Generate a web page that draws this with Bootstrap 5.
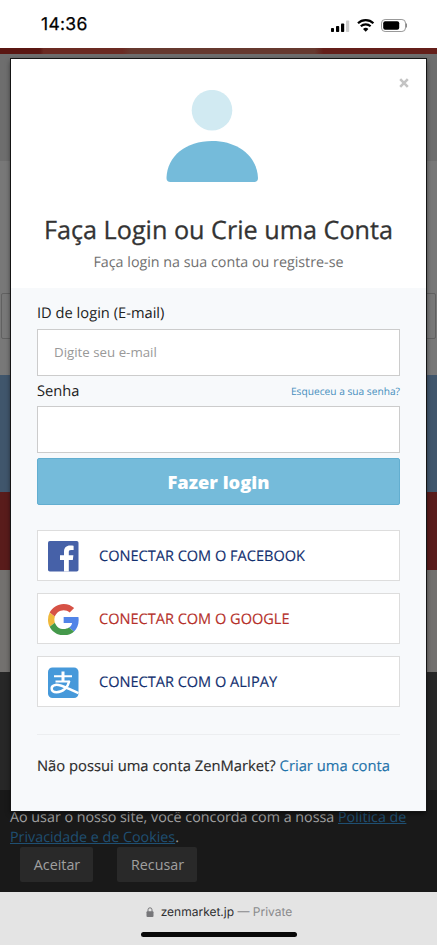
<!DOCTYPE html>
<html lang="pt">
<head>
<meta charset="utf-8">
<meta name="viewport" content="width=device-width, initial-scale=1">
<title>ZenMarket</title>
<link rel="stylesheet" href="https://cdn.jsdelivr.net/npm/bootstrap@5.3.0/dist/css/bootstrap.min.css">
<style>
body{font-family:"Open Sans","Noto Sans",sans-serif;height:945px;font-size:14px;color:#2b2b2b;background:#191919;text-rendering:geometricPrecision}
.ios{font-family:Inter,"Liberation Sans",sans-serif}
.status{height:48px;padding:3px 30px 0 41px}
.clock{font-size:17.500px;font-weight:400;color:#000;letter-spacing:.3px;-webkit-text-stroke:.25px #000}
.strip-top{height:6px;background:linear-gradient(90deg,#5a1612 0 9%,#6b2a22 10% 28%,#66392f 30% 72%,#641f1a 74%)}
.strip-nav{height:107px;background:#6e6e6e}
.strip-body{height:214px;background:#787878;padding:132px 1px 0}
.search-frame{height:46px;border:1px solid #616161;border-radius:2px}
.strip-blue{height:117px;background:#40566c}
.strip-red{height:78px;background:#591c1b}
.strip-gray{height:102px;background:#73716f}
.strip-dark{height:118px;background:#272727}
.cookie{height:102px;background:#191919;color:#a0a0a0;padding:18px 10px 0;line-height:20px;font-size:14.300px;white-space:nowrap}
.cookie a{color:#1f4f72}
.cookie-buttons{margin-top:-1px}
.btn-cookie{background:#292929;color:#a0a0a0;border-radius:2px;height:35px;font-size:14.300px;line-height:20px;border:0;padding:7px 0 6px 1px}
.btn-accept{width:73px;margin-left:10px}
.btn-refuse{width:80px;margin-left:24px}
.safari{height:53px;background:#e4e4e4;color:#8a8a8c;font-size:12px;padding-top:12px}
.safari b{color:#2f2f31;font-weight:400}
.lock{margin-right:3px;margin-left:1px}
.home-bar{width:156px;height:5px;border-radius:3px;background:#080808}
.login-box{left:11px;top:59px;width:415px;height:752px;background:#f7f9fb;box-shadow:0 0 0 1px #151515,0 2px 5px rgba(0,0,0,.65)}
.login-head{height:229px;background:#fff;padding-top:31px}
.close-x{right:17px;top:19px;width:10px;height:10px}
.avatar{margin-right:13px}
.title-line{font-size:25.200px;line-height:32px;margin-top:32px;color:#333;-webkit-text-stroke:.3px #333}
.sub-line{font-size:14.300px;line-height:20px;color:#707070;margin-top:7px}
.login-body{padding:15px 26px 0}
.lbl{line-height:20px;height:20px;font-size:14.700px;color:#222}
.form-control.zen{height:47px;border:1px solid #ccc;border-radius:0;padding:0 16px 1px;font-size:13.300px;background:#fff}
.form-control.zen::placeholder{color:#999;opacity:1}
.mail-field{margin:6px 0 5px}
.pass-field,.btn-zen{margin-top:5px}
.forgot{font-size:10.200px;color:#478fbe;padding-top:2px}
.btn-zen{height:47px;background:#75bbda;border:1px solid #62aed0;border-radius:2px;color:#fff;font-size:18.300px;font-weight:800;padding:0}
.socials{gap:12px;margin-top:25px}
.social{height:51px;border:1px solid #ddd;background:#fff;padding-left:9px;font-size:14.550px;color:#13306f}
.social span{padding-top:2px;-webkit-text-stroke:.15px currentColor}
.social svg{width:32px;height:32px;margin-right:20px}
.social.g{color:#b5302a}
.rule{height:1px;background:#eceef0;margin-top:27px}
.foot-line{margin-top:21px;line-height:20px;font-size:14.770px;white-space:nowrap;-webkit-text-stroke:.15px currentColor}
.foot-line a{color:#1f73aa}
</style>
<script src="https://cdn.jsdelivr.net/npm/bootstrap@5.3.0/dist/js/bootstrap.bundle.min.js"></script>
</head>
<body class="m-0 position-relative overflow-hidden">
<header class="status ios bg-white d-flex align-items-center justify-content-between">
  <span class="clock">14:36</span>
  <svg width="77" height="16" viewBox="0 0 77 16">
    <rect x="1" y="10" width="3" height="4" rx=".8"/><rect x="6" y="8" width="3.200" height="6" rx=".8"/><rect x="11" y="5.500" width="3.200" height="8.500" rx=".8"/><rect x="16" y="2.500" width="3.200" height="11.500" rx=".8" fill="#ccc"/>
    <g transform="translate(0 -1)"><g fill="none" stroke="#000" stroke-width="2.200"><path d="M28 6.300a11 11 0 0 1 15.400 0M30.800 9.200a7.200 7.200 0 0 1 9.800 0"/></g><path d="M33 11.900a4 4 0 0 1 5.400 0l-2.700 2.800z"/></g>
    <rect x="51.500" y="1.500" width="24" height="12" rx="3.600" fill="#fff" stroke="#999"/><rect x="53.200" y="3.200" width="16" height="8.600" rx="2"/><path d="M76.500 5.500v4" stroke="#888"/>
  </svg>
</header>
<div class="strip-top"></div>
<div class="strip-nav"></div>
<div class="strip-body"><div class="search-frame"></div></div>
<div class="strip-blue"></div>
<div class="strip-red"></div>
<div class="strip-gray"></div>
<div class="strip-dark"></div>
<div class="cookie">
  <div>Ao usar o nosso site, você concorda com a nossa <a href="#">Política de</a></div>
  <div><a href="#">Privacidade e de Cookies</a>.</div>
  <div class="cookie-buttons d-flex">
    <button class="btn btn-cookie btn-accept">Aceitar</button>
    <button class="btn btn-cookie btn-refuse">Recusar</button>
  </div>
</div>
<footer class="safari ios d-flex flex-column align-items-center">
  <div class="d-flex align-items-center lh-sm">
    <svg width="8" height="10" viewBox="0 0 8 10" class="lock"><rect x=".5" y="4.200" width="7" height="5.800" rx="1" fill="#77777a"/><path d="M2 5V2.800a2 2 0 0 1 4 0V5" fill="none" stroke="#77777a"/></svg>
    <span class="ms-1"><b>zenmarket.jp</b> — Private</span>
  </div>
  <div class="home-bar mt-auto mb-2"></div>
</footer>

<main class="login-box position-absolute">
  <svg class="close-x position-absolute" viewBox="0 0 10 10"><path d="M1.200 1.200l7.600 7.600M8.800 1.200l-7.600 7.600" stroke="#c4c4c4" stroke-width="2.600"/></svg>
  <div class="login-head d-flex flex-column align-items-center text-nowrap">
    <svg class="avatar flex-shrink-0" width="92" height="92" viewBox="0 0 92 92"><circle cx="46" cy="20.200" r="20.300" fill="#d1eaf2"/><path d="M0.500 88C1 66 20 51 46 51s45 15 46 37q0 4-4 4H4.500q-4 0-4-4z" fill="#75bbda"/></svg>
    <div class="title-line">Faça Login ou Crie uma Conta</div>
    <div class="sub-line">Faça login na sua conta ou registre-se</div>
  </div>
  <div class="login-body d-flex flex-column">
    <label class="lbl" for="mail">ID de login (E-mail)</label>
    <input id="mail" class="form-control zen mail-field" placeholder="Digite seu e-mail">
    <div class="d-flex justify-content-between align-items-center">
      <label class="lbl" for="pass">Senha</label><a class="forgot text-decoration-none" href="#">Esqueceu a sua senha?</a>
    </div>
    <input id="pass" type="password" class="form-control zen pass-field">
    <button class="btn btn-zen w-100">Fazer login</button>
    <div class="socials d-grid">
      <div class="social d-flex align-items-center">
        <svg viewBox="0 0 32 32"><rect x="1" y="1" width="30.500" height="30.500" rx="1.800" fill="#4661a8"/><path d="M17 31.500V20h-4v-4.800h4v-3.500c0-4 2.400-6.200 6-6.200 1.700 0 3.200.1 3.600.2v4.200h-2.500c-1.900 0-2.300.9-2.300 2.300v3h4.600l-.6 4.800h-4v11.500z" fill="#fff"/></svg>
        <span>CONECTAR COM O FACEBOOK</span>
      </div>
      <div class="social g d-flex align-items-center">
        <svg viewBox="-1.500 -1.500 49 49"><path fill="#d65145" d="M24 9.500c3.540 0 6.710 1.220 9.210 3.600l6.850-6.850C35.900 2.380 30.470 0 24 0 14.620 0 6.510 5.380 2.560 13.220l7.980 6.190C12.430 13.720 17.740 9.500 24 9.500z"/><path fill="#5184e8" d="M46.980 24.550c0-1.570-.15-3.090-.38-4.550H24v9.020h12.940c-.58 2.960-2.260 5.480-4.780 7.180l7.730 6c4.510-4.180 7.090-10.360 7.090-17.650z"/><path fill="#efb83b" d="M10.530 28.590A14.500 14.500 0 0 1 9.770 24c0-1.600.27-3.140.76-4.590l-7.980-6.190A23.900 23.900 0 0 0 0 24c0 3.880.92 7.540 2.560 10.780z"/><path fill="#45994b" d="M24 48c6.480 0 11.930-2.130 15.890-5.810l-7.730-6C30 37.640 27.240 38.490 24 38.490c-6.260 0-11.570-4.220-13.470-9.910l-7.980 6.190C6.510 42.620 14.620 48 24 48z"/></svg>
        <span>CONECTAR COM O GOOGLE</span>
      </div>
      <div class="social d-flex align-items-center">
        <svg viewBox="0 -.5 32 32"><rect x="1" y="1" width="30.500" height="30.500" rx="4.500" fill="#4699da"/><g fill="none" stroke="#fff"><path d="M7 9.800h18M8.500 15h14.500" stroke-width="2"/><path d="M16 5v10" stroke-width="3"/><path d="M22.300 14.500C21 20.500 16 25.800 9.500 25.800 3.500 25.800 3 19.300 8.500 18.400c5-.7 11 3.200 23 8.200" stroke-width="2.500"/></g></svg>
        <span>CONECTAR COM O ALIPAY</span>
      </div>
    </div>
    <div class="rule"></div>
    <div class="foot-line">Não possui uma conta ZenMarket? <a href="#" class="text-decoration-none">Criar uma conta</a></div>
  </div>
</main>
</body>
</html>
